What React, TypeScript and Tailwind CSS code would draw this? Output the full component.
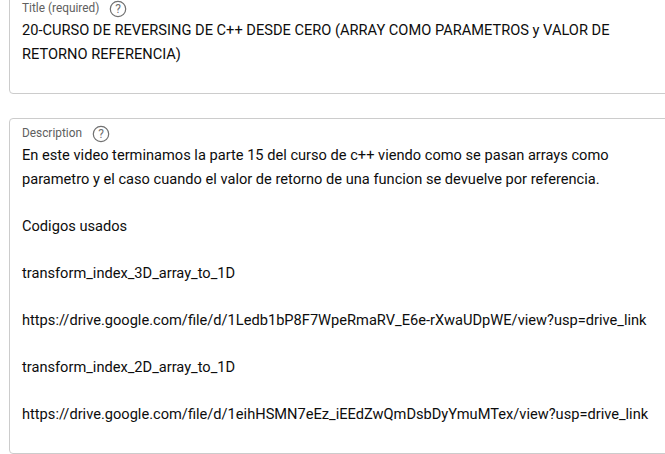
function HelpIcon() {
  return (
    <svg width="18" height="18" viewBox="0 0 18 18" fill="none" className="shrink-0">
      <circle cx="9" cy="9" r="7.7" stroke="#717171" strokeWidth="1.2" />
      <text x="9" y="13.2" textAnchor="middle" fontSize="12" fontFamily="Roboto, sans-serif" fill="#717171">
        ?
      </text>
    </svg>
  );
}

export default function App() {
  return (
    <div className="w-[665px] h-[454px] overflow-hidden bg-white font-['Roboto',sans-serif] text-[14.63px] text-[#0d0d0d]">
      <div className="w-[680px] ml-[9px] -mt-[6px] h-[100px] border border-[#cccccc] rounded-[4px] pl-[12px]">
        <div className="flex items-center gap-[10px] h-[18px] mt-[5px] text-[11.85px] text-[#606060]">
          <span>Title (required)</span>
          <HelpIcon />
        </div>
        <p className="w-[610px] leading-[24px]">
          20-CURSO DE REVERSING DE C++ DESDE CERO (ARRAY COMO PARAMETROS y VALOR DE RETORNO REFERENCIA)
        </p>
      </div>
      <div className="w-[680px] ml-[9px] mt-[24px] h-[336px] border border-[#cccccc] rounded-[4px] pl-[12px]">
        <div className="flex items-center gap-[10px] h-[18px] mt-[6px] text-[11.85px] text-[#606060]">
          <span>Description</span>
          <HelpIcon />
        </div>
        <div className="mt-[1px] w-[640px] leading-[23.5px]">
          <p>En este video terminamos la parte 15 del curso de c++ viendo como se pasan arrays como</p>
          <p>parametro y el caso cuando el valor de retorno de una funcion se devuelve por referencia.</p>
          <p className="mt-[23.5px]">Codigos usados</p>
          <p className="mt-[23.5px]">transform_index_3D_array_to_1D</p>
          <p className="mt-[23.5px]">https://drive.google.com/file/d/1Ledb1bP8F7WpeRmaRV_E6e-rXwaUDpWE/view?usp=drive_link</p>
          <p className="mt-[23.5px]">transform_index_2D_array_to_1D</p>
          <p className="mt-[23.5px]">https://drive.google.com/file/d/1eihHSMN7eEz_iEEdZwQmDsbDyYmuMTex/view?usp=drive_link</p>
        </div>
      </div>
    </div>
  );
}
